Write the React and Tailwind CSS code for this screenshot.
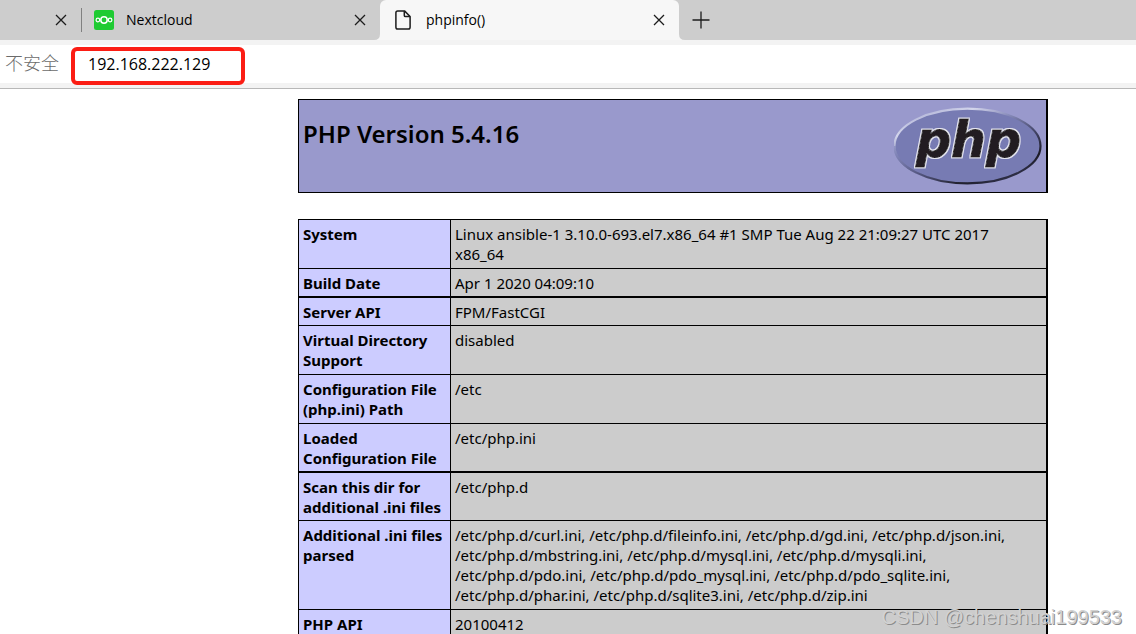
import React from "react";

const rows = [
  { name: "System", value: "Linux ansible-1 3.10.0-693.el7.x86_64 #1 SMP Tue Aug 22 21:09:27 UTC 2017 x86_64", edge: "pb-1 border-b" },
  { name: "Build Date", value: "Apr 1 2020 04:09:10", edge: "pb-[3px] border-b-2" },
  { name: "Server API", value: "FPM/FastCGI", edge: "pb-[3px] border-b" },
  { name: "Virtual Directory Support", value: "disabled", edge: "pb-1 border-b" },
  { name: "Configuration File (php.ini) Path", value: "/etc", edge: "pb-1 border-b" },
  { name: "Loaded Configuration File", value: "/etc/php.ini", edge: "pb-[3px] border-b-2" },
  { name: "Scan this dir for additional .ini files", value: "/etc/php.d", edge: "pb-[3px] border-b" },
  {
    name: "Additional .ini files parsed",
    value:
      "/etc/php.d/curl.ini, /etc/php.d/fileinfo.ini, /etc/php.d/gd.ini, /etc/php.d/json.ini, /etc/php.d/mbstring.ini, /etc/php.d/mysql.ini, /etc/php.d/mysqli.ini, /etc/php.d/pdo.ini, /etc/php.d/pdo_mysql.ini, /etc/php.d/pdo_sqlite.ini, /etc/php.d/phar.ini, /etc/php.d/sqlite3.ini, /etc/php.d/zip.ini",
    edge: "pb-1 border-b",
  },
  { name: "PHP API", value: "20100412", edge: "pb-1 border-b" },
];

function CloseButton({ label }) {
  return (
    <button type="button" aria-label={label} className="flex size-5 shrink-0 items-center justify-center">
      <svg viewBox="0 0 12 12" className="size-3" fill="none" stroke="#1c1c1c" strokeWidth="1.3">
        <path d="M1 1l10 10M11 1L1 11" />
      </svg>
    </button>
  );
}

function TabFoot({ flip }) {
  return (
    <svg viewBox="0 0 6 6" className={flip ? "absolute -right-[6px] bottom-0 size-[6px]" : "absolute -left-[6px] bottom-0 size-[6px]"} fill="#f7f7f7">
      <path d={flip ? "M0 0Q0 6 6 6H0Z" : "M6 0Q6 6 0 6H6Z"} />
    </svg>
  );
}

function NextcloudIcon() {
  return (
    <svg viewBox="0 0 20 20" className="size-5 shrink-0" fill="none" stroke="#fff">
      <rect width="20" height="20" rx="2.5" fill="#1ecb32" stroke="none" />
      <circle cx="10" cy="10" r="3.2" strokeWidth="1.5" />
      <circle cx="3.9" cy="10" r="1.8" strokeWidth="1.2" />
      <circle cx="16.1" cy="10" r="1.8" strokeWidth="1.2" />
    </svg>
  );
}

function FileIcon() {
  return (
    <svg viewBox="0 0 16 20" className="h-5 w-4 shrink-0" fill="none" stroke="#1c1c1c" strokeWidth="1.5" strokeLinejoin="round">
      <path d="M2.7.9h6.8l5.6 5.6v10.8a1.8 1.8 0 0 1-1.8 1.8H2.7A1.8 1.8 0 0 1 .9 17.3V2.7A1.8 1.8 0 0 1 2.7.9Z" />
      <path d="M9.3 1v4.4a1.2 1.2 0 0 0 1.2 1.2h4.5" />
    </svg>
  );
}

function PhpLogo() {
  return (
    <svg viewBox="0 0 150 80" role="img" aria-label="PHP logo" className="h-20 w-[150px] shrink-0">
      <defs>
        <linearGradient id="rim" x1="0.15" y1="0" x2="0.85" y2="1">
          <stop offset="0" stopColor="#a5a8d0" />
          <stop offset="0.18" stopColor="#d4d6ec" />
          <stop offset="0.36" stopColor="#8589b8" />
          <stop offset="0.6" stopColor="#3f4162" />
          <stop offset="0.8" stopColor="#1c1b26" />
          <stop offset="1" stopColor="#3a3c5c" />
        </linearGradient>
        <linearGradient id="fade" x1="0" y1="0" x2="1" y2="0">
          <stop offset="0" stopColor="#777bb3" stopOpacity="0.5" />
          <stop offset="1" stopColor="#777bb3" stopOpacity="0" />
        </linearGradient>
        <filter id="outline" x="-5%" y="-10%" width="110%" height="120%">
          <feMorphology in="SourceAlpha" operator="dilate" radius="1" result="grown" />
          <feFlood floodColor="#e6e6ef" />
          <feComposite in2="grown" operator="in" result="halo" />
          <feMerge>
            <feMergeNode in="halo" />
            <feMergeNode in="SourceGraphic" />
          </feMerge>
        </filter>
      </defs>
      <ellipse cx="73.5" cy="40" rx="73" ry="37.3" fill="#777bb3" stroke="url(#rim)" strokeWidth="2.2" />
      <path d="M.5 40a73 37.3 0 0 0 73 37.3" fill="none" stroke="url(#fade)" strokeWidth="2.4" />
      <text
        x="22"
        y="51"
        className="font-['DejaVu_Sans',sans-serif] text-[49px] font-bold italic"
        fill="#231f20"
        stroke="#231f20"
        strokeWidth="1"
        filter="url(#outline)"
      >
        php
      </text>
    </svg>
  );
}

export default function App() {
  return (
    <div className="relative flex h-screen flex-col overflow-hidden bg-white font-['Open_Sans','Noto_Sans_CJK_SC',sans-serif] text-black">
      <header className="shrink-0">
        <div className="flex h-10 bg-[#cdcdcd] text-[14px]">
          <div className="flex w-[81px] shrink-0 items-center justify-end pr-2.5">
            <CloseButton label="Close tab" />
          </div>
          <div className="flex w-[299px] shrink-0 items-center pr-2.5">
            <span className="mr-3 h-6 w-px bg-[#808080]" />
            <NextcloudIcon />
            <a href="#nextcloud" className="ml-3 flex-1 pb-0.5">Nextcloud</a>
            <CloseButton label="Close Nextcloud" />
          </div>
          <div className="relative flex w-[299px] shrink-0 items-center rounded-t-md bg-[#f7f7f7] pr-2.5 pl-[15px]">
            <TabFoot />
            <FileIcon />
            <a href="#phpinfo" className="ml-[15px] flex-1 pb-0.5">phpinfo()</a>
            <CloseButton label="Close phpinfo()" />
            <TabFoot flip />
          </div>
          <button type="button" aria-label="New tab" className="ml-[13px] flex items-center">
            <svg viewBox="0 0 18 18" className="mt-[11px] size-[18px] self-start" fill="none" stroke="#1c1c1c" strokeWidth="1.3">
              <path d="M9 .5v17M.5 9h17" />
            </svg>
          </button>
        </div>
        <div className="border-b border-[#b8b8b8] bg-[#f3f3f3] pt-[5px] pb-[5px]">
          <div className="flex h-[38px] items-end bg-white">
            <label htmlFor="address" className="w-[71px] pb-2 pl-[5px] text-[18px] leading-6 font-light text-[#6b6b6b]">不安全</label>
            <input
              id="address"
              type="text"
              defaultValue="192.168.222.129"
              className="-mb-0.5 h-[38px] w-[174px] rounded-md border-4 border-[#fb1d14] bg-white pr-2 pb-1 pl-[13px] text-[16px] outline-none"
            />
          </div>
        </div>
      </header>
      <main className="min-h-0 flex-1 overflow-hidden pt-2.5 pr-[88px] pl-[298px] font-['Noto_Sans',sans-serif]">
        <div className="flex h-[94px] items-start justify-between border border-r-2 border-black bg-[#9999cc] pt-[6px] pr-0.5 pl-1">
          <h1 className="pt-3 text-[24px] leading-8 font-semibold">PHP Version 5.4.16</h1>
          <PhpLogo />
        </div>
        <table className="mt-[26px] w-full table-fixed border-separate border-spacing-0 border-t border-r-2 border-l border-black text-left text-[15px] leading-5">
          <colgroup>
            <col className="w-[152px]" />
            <col />
          </colgroup>
          <tbody>
            {rows.map((row) => (
              <tr key={row.name} className="align-top">
                <th scope="row" className={`border-r border-black bg-[#ccccff] pt-1 pl-1 font-bold ${row.edge}`}>{row.name}</th>
                <td className={`border-black bg-[#cccccc] pt-1 pr-4 pl-1 ${row.edge}`}>{row.value}</td>
              </tr>
            ))}
          </tbody>
        </table>
      </main>
      <div className="pointer-events-none absolute right-[14px] bottom-[5px] font-['Liberation_Sans',sans-serif] text-[20px] leading-6 text-[#d2d2d2] [text-shadow:1px_1px_0_#8c8c8c]">
        CSDN @chenshuai199533
      </div>
    </div>
  );
}
